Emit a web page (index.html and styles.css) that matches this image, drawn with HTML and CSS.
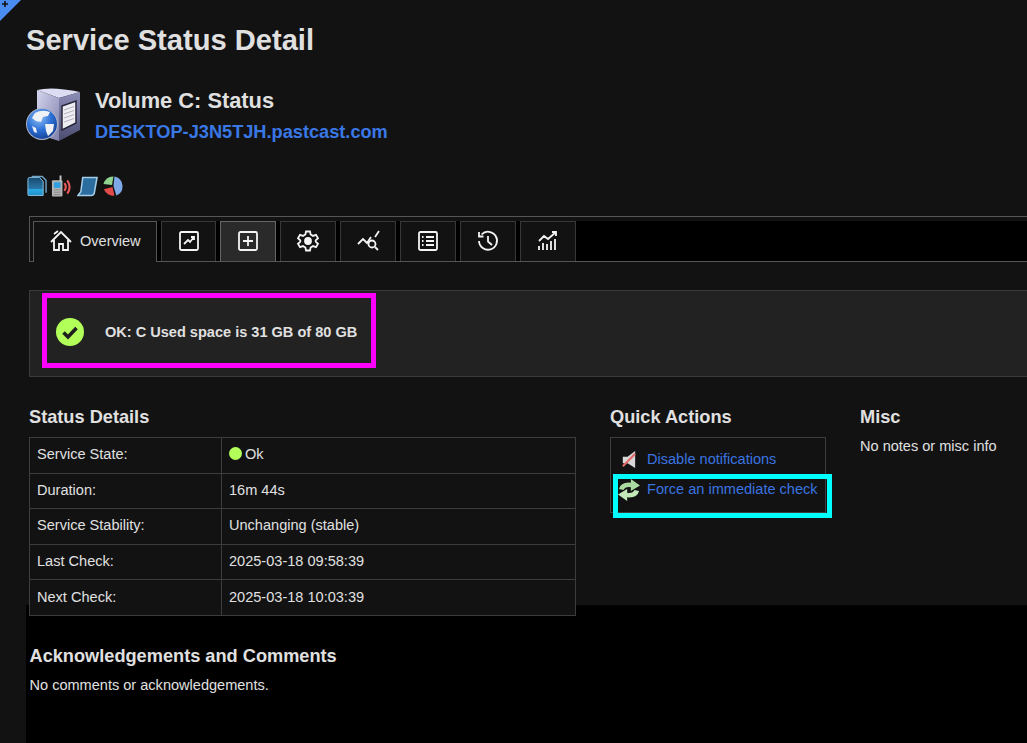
FILE: index.html
```html
<!DOCTYPE html>
<html lang="en">
<head>
<meta charset="utf-8">
<title>Service Status Detail</title>
<link rel="stylesheet" href="styles.css">
</head>
<body>
<div class="corner"><svg class="corner-plus" viewBox="0 0 8 8"><path d="M4 1 V7 M1 4 H7"/></svg></div>
<div class="upper">
  <h1 class="page-title">Service Status Detail</h1>
  <div class="host-head">
    <svg class="host-icon" viewBox="0 0 56 56">
      <defs>
        <linearGradient id="srv" x1="0" y1="0" x2="1" y2="1"><stop offset="0" stop-color="#d5d6ee"/><stop offset="1" stop-color="#7f80ab"/></linearGradient>
        <linearGradient id="srv2" x1="0" y1="0" x2="0" y2="1"><stop offset="0" stop-color="#8d8eb8"/><stop offset="1" stop-color="#4b4c70"/></linearGradient>
        <radialGradient id="globe" cx=".4" cy=".3" r=".75"><stop offset="0" stop-color="#8fc0f5"/><stop offset=".55" stop-color="#2b6fd6"/><stop offset="1" stop-color="#163f92"/></radialGradient>
      </defs>
      <path d="M11 4 Q26 0 54 6 L33 12 Z" fill="#dcddf2"/>
      <path d="M11 4 L33 12 V55 L11 48 Z" fill="url(#srv)"/>
      <path d="M33 12 L54 6 V44 L33 55 Z" fill="url(#srv2)"/>
      <path d="M36 20 L50 15 V37 L36 44 Z" fill="#eeeef2" stroke="#26263a" stroke-width="1.500"/>
      <path d="M38 24 L48 20.500 M38 28 L48 24.500 M38 32 L48 28.500 M38 36 L48 32.500" stroke="#b0b0c0" fill="none"/>
      <circle cx="16" cy="38" r="16" fill="#aab4c8"/>
      <circle cx="16" cy="38" r="15" fill="url(#globe)"/>
      <path d="M9 27 q7 -4 15 -1 l-2 4 l-5 1 l-2 5 l-5 -1 l-4 -3z M19 38 l9 0 l-1 7 l-5 5 l-2 -5z M6 40 l4 2 l1 5 l-3 -1z" fill="#eef2f6"/>
    </svg>
    <div class="host-text">
      <div class="svc-name">Volume C: Status</div>
      <a class="host-link" href="#">DESKTOP-J3N5TJH.pastcast.com</a>
    </div>
  </div>
  <div class="mini-icons">
    <svg class="mini" viewBox="0 0 22 22">
      <defs>
        <linearGradient id="bl" x1="0" y1="0" x2="0" y2="1"><stop offset="0" stop-color="#184a6e"/><stop offset=".65" stop-color="#2a78ac"/><stop offset=".66" stop-color="#2aa8e4"/><stop offset="1" stop-color="#1f8ec8"/></linearGradient>
      </defs>
      <path d="M6 1 H17 L21 5 V18" fill="none" stroke="#6fa6cc" stroke-width="1.500"/>
      <path d="M2 4 Q2 2 4 2 H14 L18 6 V21 H3 Q2 21 2 20 Z" fill="url(#bl)" stroke="#8cc0e0"/>
    </svg>
    <svg class="mini mini-phone" viewBox="0 0 22 22"><rect x="1" y="5" width="11" height="17" rx="1" fill="#b4b4b4"/><rect x="9" y="0" width="2" height="6" fill="#c8c8c8"/><rect x="3" y="7" width="7" height="6" fill="#2f9fe0"/><path d="M3 15 H10 M3 17.500 H10 M3 20 H10" stroke="#888" fill="none"/><path d="M14 8 q3 4 0 8 M17 5 q5 7 0 14" fill="none" stroke="#e85a5a" stroke-width="2.200"/></svg>
    <svg class="mini mini-scroll" viewBox="0 0 22 22"><path d="M6 2 H21 L18 19 Q17 21 15 21 H1 L4 17 Z" fill="#2c6d9f" stroke="#a4cdea" stroke-width="1.600"/></svg>
    <svg class="mini" viewBox="0 0 22 22"><path d="M12 11 L13 1 A10.500 10.500 0 0 1 15 21 Z" fill="#7fa8e8"/><path d="M10.500 10 L1.500 9 A10 10 0 0 1 12 1 Z" fill="#8fd48f"/><path d="M11 12 L13 21 A10 10 0 0 1 2 14.500 Z" fill="#e24b4b"/></svg>
  </div>

  <div class="tab-strip">
    <div class="tab-row">
      <div class="tab tab-active">
        <svg class="ti" viewBox="0 0 24 24"><path d="M2 13 L12 3 L22 13 M5 11 V21 H10 V15 H14 V21 H19 V11 M5 5 L9 2"/></svg>
        <span class="tab-label">Overview</span>
      </div>
      <div class="tab tab-w55"><svg class="ti" viewBox="0 0 24 24"><rect x="3" y="3" width="18" height="18" rx="1.500"/><path d="M7 15 L11 11 L13 13 L17 8 M14 8 H17 V11"/></svg></div>
      <div class="tab tab-current"><svg class="ti" viewBox="0 0 24 24"><rect x="3" y="3" width="18" height="18" rx="1.500"/><path d="M12 7 V17 M7 12 H17"/></svg></div>
      <div class="tab"><svg class="ti" viewBox="0 0 24 24"><path d="M10 2.500 H14 L14.600 5.500 L17 6.900 L20 5.900 L22 9.300 L19.700 11.300 V12.700 L22 14.700 L20 18.100 L17 17.100 L14.600 18.500 L14 21.500 H10 L9.400 18.500 L7 17.100 L4 18.100 L2 14.700 L4.300 12.700 V11.300 L2 9.300 L4 5.900 L7 6.900 L9.400 5.500 Z"/><circle class="ti-fill" cx="12" cy="12" r="3"/></svg></div>
      <div class="tab"><svg class="ti" viewBox="0 0 24 24"><path d="M2 15 L7 10 L11 14 L15 8 M19 8 L23 2"/><circle cx="16" cy="15" r="3.500"/><path d="M19 18 L22 21"/></svg></div>
      <div class="tab"><svg class="ti" viewBox="0 0 24 24"><rect x="3" y="3" width="18" height="18" rx="1.500"/><path d="M10 8 H18 M10 12 H18 M10 16 H18 M6 8 H7.500 M6 12 H7.500 M6 16 H7.500"/></svg></div>
      <div class="tab"><svg class="ti" viewBox="0 0 24 24"><path d="M5.500 5.500 A9 9 0 1 1 3 12 M3 3 V7.500 H7.500 M12 7 V12.500 L16 16"/></svg></div>
      <div class="tab"><svg class="ti" viewBox="0 0 24 24"><path d="M3 12 L8 7 L12 10 L20 3 M16 3 H20 V7 M3 17 V21 M7 14 V21 M11 15 V21 M15 12 V21 M19 10 V21"/></svg></div>
    </div>
  </div>

  <div class="status-panel">
    <div class="status-msg">
      <svg class="ok-icon" viewBox="0 0 28 28"><circle cx="14" cy="14" r="14" fill="#b2ff59"/><path d="M7.500 14.500 L12 19 L20.500 10" fill="none" stroke="#1f1f1f" stroke-width="3.600"/></svg>
      <span class="status-text">OK: C Used space is 31 GB of 80 GB</span>
    </div>
  </div>

  <div class="columns">
    <section class="col-details">
      <h2 class="sec-title">Status Details</h2>
      <table class="details">
        <tr><td class="k">Service State:</td><td><span class="dot"></span>Ok</td></tr>
        <tr><td class="k">Duration:</td><td>16m 44s</td></tr>
        <tr><td class="k">Service Stability:</td><td>Unchanging (stable)</td></tr>
        <tr><td class="k">Last Check:</td><td>2025-03-18 09:58:39</td></tr>
        <tr><td class="k">Next Check:</td><td>2025-03-18 10:03:39</td></tr>
      </table>
    </section>
    <section class="col-actions">
      <h2 class="sec-title">Quick Actions</h2>
      <div class="actions">
        <div class="action">
          <svg class="act-icon" viewBox="0 0 20 20"><path d="M4 7 H9 L17 1 V19 L9 14 H4 Z" fill="#d8d8d8"/><path d="M4 17 L17 4" stroke="#e46a6a" stroke-width="2.200"/></svg>
          <a href="#">Disable notifications</a>
        </div>
        <div class="action action-hl">
          <svg class="act-icon act-refresh" viewBox="0 0 24 24"><path d="M1 11 Q3 3 14 4 V0 L24 7 L14 13 V9 Q8 8 6 12 Z" fill="#a9dba0"/><path d="M23 13 Q21 21 10 20 V24 L0 17 L10 11 V15 Q16 16 18 12 Z" fill="#c2e8ba"/></svg>
          <a href="#">Force an immediate check</a>
        </div>
      </div>
    </section>
    <section class="col-misc">
      <h2 class="sec-title">Misc</h2>
      <p class="misc-text">No notes or misc info</p>
    </section>
  </div>
</div>
<div class="lower">
  <h2 class="sec-title">Acknowledgements and Comments</h2>
  <p class="ack-text">No comments or acknowledgements.</p>
</div>
</body>
</html>
```
FILE: styles.css
```css
*, *::after { box-sizing: border-box; }
html, body { margin: 0; height: 100%; overflow: hidden; }
body {
  background: #121212;
  color: #e0e0e0;
  font-family: "Liberation Sans", Arial, sans-serif;
  font-size: 14.56px;
  position: relative;
}
a { color: #3a74e0; text-decoration: none; }
.corner {
  position: absolute; left: 0; top: 0; width: 21px; height: 21px;
  background: #4a8cf0; clip-path: polygon(0 0, 100% 0, 0 100%);
}
.corner-plus { display: block; width: 8px; height: 8px; margin-left: 1px; fill: none; stroke: #111; stroke-width: 1.6; }
.upper { position: relative; z-index: 1; height: 605px; padding: 0 0 0 26px; }
.page-title { margin: 0; padding-top: 24px; font-size: 29.12px; line-height: 32px; font-weight: bold; color: #e0e0e0; }
.host-head { display: flex; margin-top: 30px; }
.host-icon { width: 56px; height: 56px; flex: none; filter: blur(.5px); }
.host-text { margin-left: 13px; padding-top: 2px; }
.svc-name { font-size: 21.84px; font-weight: bold; line-height: 26px; }
.host-link { display: block; font-size: 18.2px; font-weight: bold; line-height: 24px; margin-top: 6px; color: #3a78e6; }
.mini-icons { display: flex; gap: 4px; margin-top: 31px; height: 22px; padding-left: 0; }
.mini { width: 21px; height: 22px; flex: none; filter: blur(.5px); }
.mini-scroll { margin-left: 1px; }
.tab-strip {
  margin: 19px 0 0 3px; height: 46px; padding: 4px 0 0 3px;
  background: #121212;
  border: 1px solid #555; border-right: 0;
}
.tab-row { display: flex; gap: 4px; height: 40px; background: #000; }
.tab {
  display: flex; align-items: center; justify-content: center;
  width: 56px; height: 40px; padding-bottom: 2px; background: #121212;
  border: 1px solid #383838; border-bottom: 0;
}
.tab-w55 { width: 55px; }
.tab-active { width: 124px; height: 41px; flex: none; justify-content: flex-start; padding: 0 0 3px 15px; border-color: #555; border-bottom: 0; }
.tab-current { background: #2a2a2a; border-color: #666; }
.tab-label { margin-left: 7px; font-size: 14.56px; }
.ti { width: 24px; height: 24px; flex: none; fill: none; stroke: #f4f4f4; stroke-width: 1.8; }
.ti-fill { fill: #f4f4f4; }
.status-panel {
  margin: 28px 0 0 3px; height: 87px; padding: 2px 0 0 12px;
  background: #222; border: 1px solid #3a3a3a; border-right: 0;
}
.status-msg {
  display: flex; align-items: center; width: 334px; height: 75px; padding: 2px 0 0 9px;
  border: 5px solid #ff00ff; font-weight: bold; color: #e0e0e0;
}
.ok-icon { width: 28px; height: 28px; flex: none; }
.status-text { margin-left: 21px; }
.columns { display: flex; margin: 30px 0 0 3px; }
.col-details { width: 581px; flex: none; }
.col-actions { width: 250px; flex: none; }
.sec-title { margin: 0; font-size: 18.2px; line-height: 21px; font-weight: bold; color: #e0e0e0; }
.details { margin-top: 9px; width: 547px; border-collapse: collapse; background: #121212; }
.details td { border: 1px solid #3d3d3d; padding: 0 7px 1px; height: 35.6px; line-height: 17px; }
.details .k { width: 192px; }
.dot { display: inline-block; width: 13px; height: 13px; border-radius: 50%; background: #b2ff59; margin-right: 3px; vertical-align: -1px; }
.actions { position: relative; margin-top: 9px; width: 216px; height: 76px; padding: 12px 0 0 8px; border: 1px solid #3d3d3d; }
.action { display: flex; align-items: center; height: 18px; margin-bottom: 12px; }
.act-icon { width: 19px; height: 19px; flex: none; margin-right: 9px; filter: blur(.4px); }
.act-refresh { width: 22px; height: 22px; margin: 2px 7px 0 -1px; filter: blur(.6px); }
.action-hl::after {
  content: ""; position: absolute; left: 2px; top: 36px; width: 219px; height: 44px;
  border: 5px solid #00ffff;
}
.misc-text { margin: 10px 0 0; line-height: 17px; }
.lower { margin-left: 26px; height: 138px; padding: 41px 0 0 3.5px; background: #000; }
.ack-text { margin: 10px 0 0; line-height: 17px; }
```
